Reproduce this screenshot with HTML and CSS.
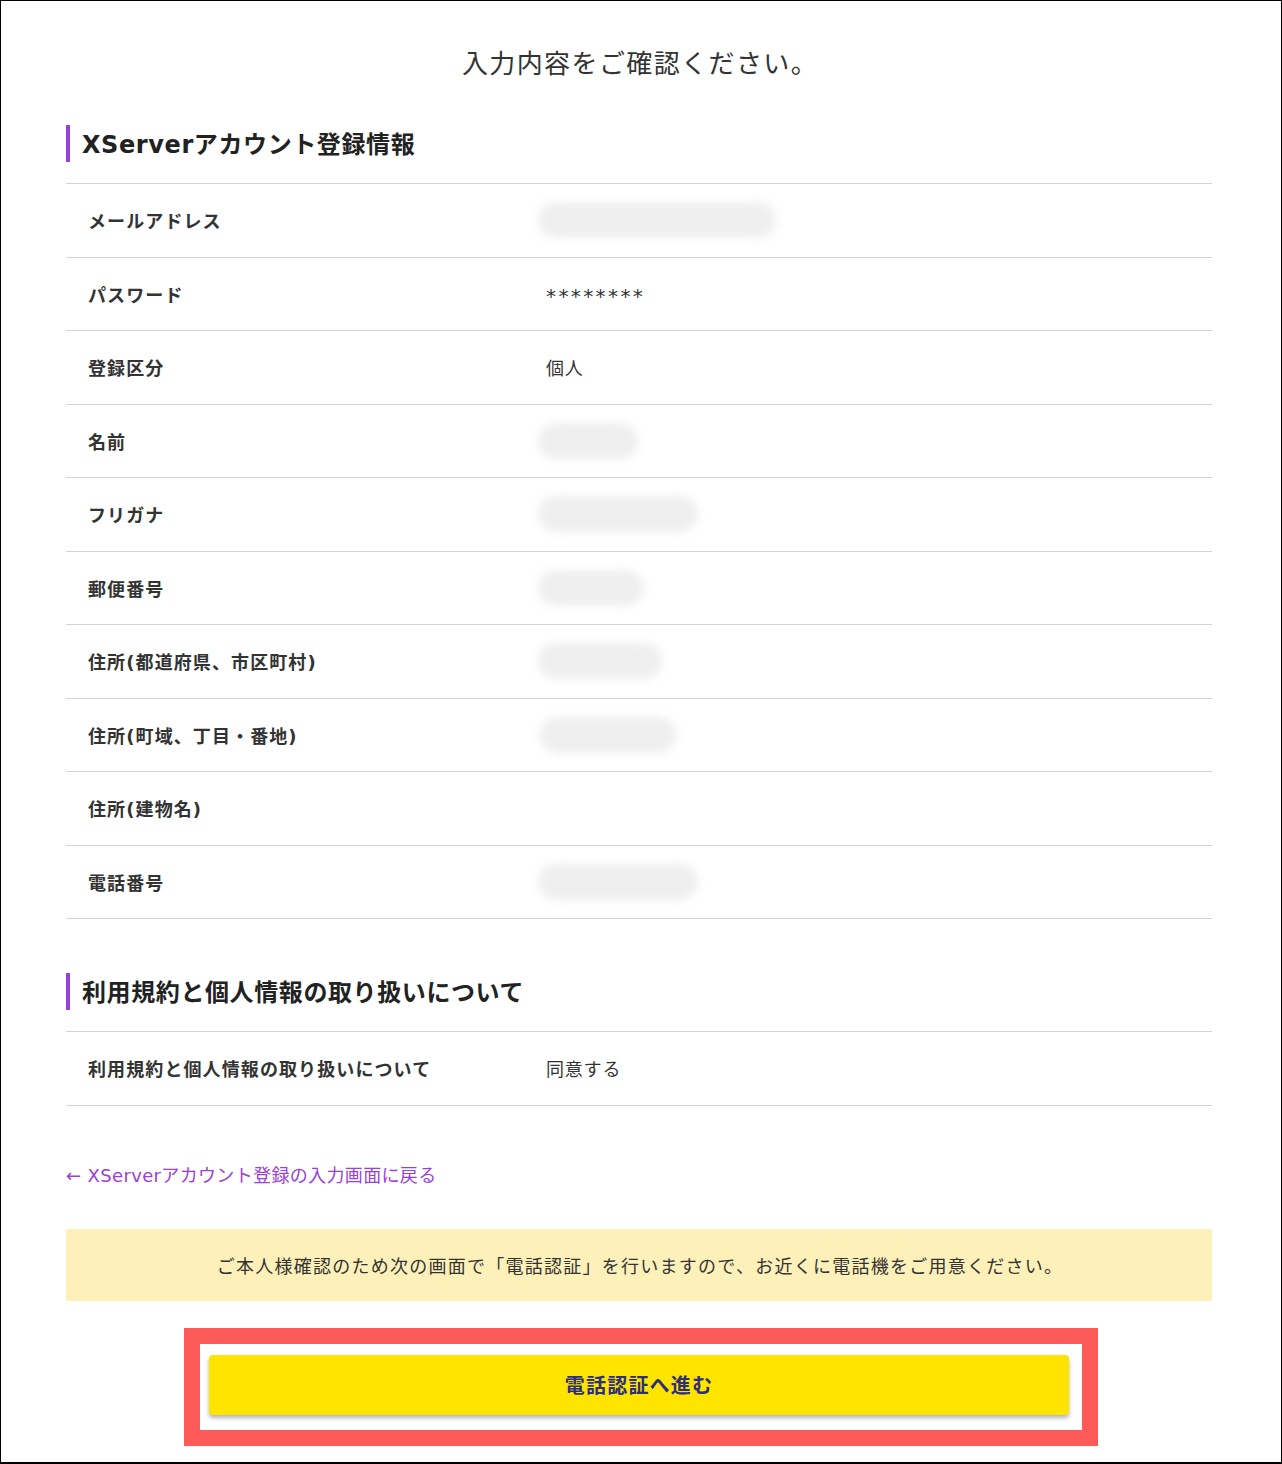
FILE: index.html
```html
<!DOCTYPE html>
<html lang="ja">
<head>
<meta charset="utf-8">
<title>入力内容をご確認ください。</title>
<link rel="stylesheet" href="styles.css">
</head>
<body>
<div class="frame">
  <main class="main">
    <h1 class="title">入力内容をご確認ください。</h1>

    <section class="section">
      <h2 class="sec-head">XServerアカウント登録情報</h2>
      <div class="table">
        <div class="row"><div class="label">メールアドレス</div><div class="value"><span class="blur" style="width:238px"></span></div></div>
        <div class="row"><div class="label">パスワード</div><div class="value stars">********</div></div>
        <div class="row"><div class="label">登録区分</div><div class="value">個人</div></div>
        <div class="row"><div class="label">名前</div><div class="value"><span class="blur" style="width:100px"></span></div></div>
        <div class="row"><div class="label">フリガナ</div><div class="value"><span class="blur" style="width:160px"></span></div></div>
        <div class="row"><div class="label">郵便番号</div><div class="value"><span class="blur" style="width:106px"></span></div></div>
        <div class="row"><div class="label">住所(都道府県、市区町村)</div><div class="value"><span class="blur" style="width:124px"></span></div></div>
        <div class="row"><div class="label">住所(町域、丁目・番地)</div><div class="value"><span class="blur blur-r" style="width:136px"></span></div></div>
        <div class="row"><div class="label">住所(建物名)</div><div class="value"></div></div>
        <div class="row"><div class="label">電話番号</div><div class="value"><span class="blur" style="width:160px"></span></div></div>
      </div>
    </section>

    <section class="section section-2">
      <h2 class="sec-head">利用規約と個人情報の取り扱いについて</h2>
      <div class="table">
        <div class="row"><div class="label">利用規約と個人情報の取り扱いについて</div><div class="value">同意する</div></div>
      </div>
    </section>

    <a class="back-link" href="#">← XServerアカウント登録の入力画面に戻る</a>

    <div class="notice">ご本人様確認のため次の画面で「電話認証」を行いますので、お近くに電話機をご用意ください。</div>

    <div class="highlight">
      <button class="submit" type="button">電話認証へ進む</button>
    </div>
  </main>
</div>
</body>
</html>
```

FILE: styles.css
```css
* { box-sizing: border-box; }

html, body {
  margin: 0;
  padding: 0;
  background: #fff;
}

body {
  font-family: "Noto Sans CJK JP", "Noto Sans", "Liberation Sans", sans-serif;
  color: #333;
}

.frame {
  width: 1282px;
  height: 1464px;
  border: 1px solid #000;
  border-bottom-width: 2px;
  overflow: hidden;
}

.main {
  width: 1146px;
  margin-left: 65px;
  padding-top: 41px;
}

.title {
  margin: 0;
  text-align: center;
  font-size: 26px;
  line-height: 39px;
  font-weight: 400;
  color: #333;
  letter-spacing: 1.4px;
  padding-left: 2px;
}

.section { margin-top: 44px; }
.section-2 { margin-top: 54px; }

.sec-head {
  margin: 0 0 21px;
  border-left: 4px solid #9a40d8;
  padding: 3px 0 0 12px;
  height: 37px;
  font-family: "DejaVu Sans", "Noto Sans CJK JP", sans-serif;
  font-size: 24px;
  line-height: 34px;
  font-weight: 700;
  color: #222;
  letter-spacing: 0.6px;
}

.table {
  border-top: 1px solid #d4d4d4;
}

.row {
  display: grid;
  grid-template-columns: 480px 1fr;
  align-items: center;
  height: 73.5px;
  border-bottom: 1px solid #d4d4d4;
}

.label {
  padding-left: 22px;
  font-family: "DejaVu Sans", "Noto Sans CJK JP", sans-serif;
  font-size: 18px;
  font-weight: 700;
  color: #333;
  letter-spacing: 1.1px;
}

.value {
  font-size: 18px;
  color: #333;
  letter-spacing: 0.8px;
  display: flex;
  align-items: center;
}

.stars {
  font-family: "DejaVu Sans", sans-serif;
  font-size: 20px;
  letter-spacing: 2.4px;
  padding-top: 4px;
}

.blur {
  display: block;
  height: 36px;
  margin-left: -8px;
  border-radius: 18px;
  background: #efefef;
  filter: blur(4px);
}

.blur-r { margin-left: -6px; }

.back-link {
  display: block;
  margin-top: 56px;
  font-family: "DejaVu Sans", "Noto Sans CJK JP", sans-serif;
  font-size: 18px;
  line-height: 27px;
  color: #9a40d8;
  text-decoration: none;
  letter-spacing: 0.35px;
}

.notice {
  margin-top: 40px;
  height: 72px;
  background: #fef0b9;
  border-radius: 2px;
  display: flex;
  align-items: center;
  justify-content: center;
  font-size: 18px;
  letter-spacing: 1.25px;
  color: #333;
  padding-left: 2px;
}

.highlight {
  width: 914px;
  margin: 27px 0 0 118px;
  border: 16px solid #ff5a5a;
  padding: 11px 13px 15px 9px;
  background: #fff;
}

.submit {
  display: block;
  width: 100%;
  height: 60px;
  border: none;
  border-radius: 4px;
  background: #ffe400;
  box-shadow: 0 3px 4px rgba(0, 0, 0, 0.3);
  font-family: "Noto Sans CJK JP", "Noto Sans", sans-serif;
  font-size: 20px;
  font-weight: 700;
  letter-spacing: 1.2px;
  color: #2b2f7c;
  cursor: pointer;
}
```
